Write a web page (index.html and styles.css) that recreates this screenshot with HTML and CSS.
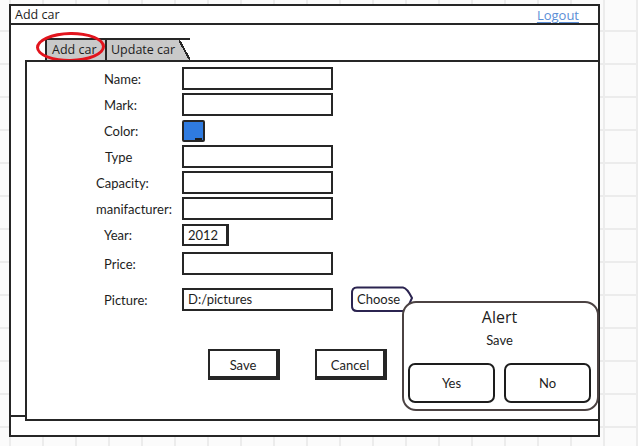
FILE: index.html
```html
<!DOCTYPE html>
<html>
<head>
    <meta http-equiv="Content-Type" content="text/html; charset=UTF-8">
    <link rel="stylesheet" href="styles.css">
</head>
<body>
    <div class="window">
        <div class="titlebar">
            <span class="title">Add car</span>
            <a class="logout" href="#">Logout</a>
        </div>

        <div class="content">
            <div class="tabs">
                <div class="tab tab-active">Add car</div>
                <div class="tab tab-slant">Update car</div>
                <div class="mark"></div>
            </div>

            <div class="panel">
                <div class="form">
                    <div class="row">
                        <span class="label">Name:</span>
                        <span class="field"></span>
                    </div>
                    <div class="row">
                        <span class="label">Mark:</span>
                        <span class="field"></span>
                    </div>
                    <div class="row">
                        <span class="label">Color:</span>
                        <span class="swatch"></span>
                    </div>
                    <div class="row">
                        <span class="label label-shift">Type</span>
                        <span class="field"></span>
                    </div>
                    <div class="row">
                        <span class="label label-wide">Capacity:</span>
                        <span class="field"></span>
                    </div>
                    <div class="row">
                        <span class="label label-wide">manifacturer:</span>
                        <span class="field"></span>
                    </div>
                    <div class="row">
                        <span class="label">Year:</span>
                        <span class="field field-short">2012</span>
                    </div>
                    <div class="row row-price">
                        <span class="label">Price:</span>
                        <span class="field"></span>
                    </div>
                    <div class="row row-picture">
                        <span class="label">Picture:</span>
                        <span class="field">D:/pictures</span>
                        <span class="choose">
                            <svg class="choose-shape" width="64" height="27" viewBox="0 0 64 27">
                                <path d="M7,1.5 H53 Q57,2 62,12 L56,25 H7 Q1.5,25 2,19 V8 Q1.5,1.5 7,1.5 Z" fill="#fff" stroke="#2b2450" stroke-width="2"/>
                            </svg>
                            <span class="choose-text">Choose</span>
                        </span>
                    </div>
                </div>

                <div class="actions">
                    <span class="button">Save</span>
                    <span class="button">Cancel</span>
                </div>

                <div class="alert">
                    <div class="alert-title">Alert</div>
                    <div class="alert-text">Save</div>
                    <div class="alert-buttons">
                        <span class="alert-button">Yes</span>
                        <span class="alert-button">No</span>
                    </div>
                </div>
            </div>

            <div class="statusbar"></div>
        </div>
    </div>
</body>
</html>
```

FILE: styles.css
```css
html, body {
    margin: 0;
    height: 100%;
}

body {
    background-color: #fbfbfb;
    background-image:
        linear-gradient(to right, #ececec 2px, transparent 2px),
        linear-gradient(to bottom, #ececec 2px, transparent 2px);
    background-size: 33px 33px;
    background-position: 42px 0, 0 30px;
    font-family: "Open Sans", "DejaVu Sans", sans-serif;
    color: #1d1d1d;
}

.window {
    box-sizing: border-box;
    width: 591px;
    height: 433px;
    margin: 4px 0 0 9px;
    border: 2px solid #262626;
    background: #fff;
    display: flex;
    flex-direction: column;
}

.titlebar {
    height: 17px;
    border-bottom: 2px solid #262626;
    display: flex;
    align-items: center;
    justify-content: space-between;
    padding: 0 19px 0 4px;
    font-size: 12.5px;
}

.logout {
    color: #5b8ed6;
    font-size: 13px;
    text-decoration: underline;
    text-decoration-thickness: 1px;
    text-underline-offset: 2px;
}

.content {
    flex: 1;
    display: flex;
    flex-direction: column;
}

.tabs {
    position: relative;
    display: flex;
    margin: 13px 0 0 34px;
    height: 22px;
}

.tab {
    box-sizing: border-box;
    height: 22px;
    background: #c9c9c9;
    border: 2px solid #262626;
    border-bottom: none;
    font-size: 12.5px;
    line-height: 19px;
    white-space: nowrap;
}

.tab-active {
    width: 60px;
    padding-left: 5px;
    border-right: none;
}

.tab-slant {
    position: relative;
    width: 74px;
    border-right: none;
    padding-left: 4px;
}

.tab-slant::after {
    content: "";
    position: absolute;
    top: -2px;
    right: -11px;
    width: 11px;
    height: 22px;
    background: linear-gradient(to top right, #c9c9c9 calc(50% - 1px), #262626 calc(50% - 1px), #262626 calc(50% + 1px), transparent calc(50% + 1px));
    border-top: 2px solid #262626;
    box-sizing: border-box;
}

.mark {
    position: absolute;
    left: -9px;
    top: -6px;
    width: 69px;
    height: 30px;
    box-sizing: border-box;
    border: 3.5px solid #e2141d;
    border-radius: 50%;
    transform: rotate(-1deg);
}

.panel {
    position: relative;
    z-index: 1;
    box-sizing: border-box;
    height: 361px;
    margin: 0 -2px 0 14px;
    border: 2px solid #262626;
    background: #fff;
    padding: 5px 0 0 0;
}

.form {
    display: flex;
    flex-direction: column;
    gap: 3px;
}

.row {
    display: flex;
    align-items: center;
    height: 23px;
}

.row-price {
    margin-top: 3px;
}

.row-picture {
    margin-top: 10px;
}

.label {
    box-sizing: border-box;
    width: 155px;
    padding-left: 77px;
    font-family: Lato, "DejaVu Sans", sans-serif;
    font-size: 13px;
}

.label-shift {
    padding-left: 78px;
}

.label-wide {
    padding-left: 69px;
}

.field {
    box-sizing: border-box;
    width: 151px;
    height: 23px;
    border: 2px solid #262626;
    font-family: Lato, "DejaVu Sans", sans-serif;
    font-size: 13px;
    line-height: 19px;
    padding-left: 4px;
}

.field-short {
    width: 47px;
    height: 22px;
    border-right-width: 3px;
}

.swatch {
    position: relative;
    box-sizing: border-box;
    width: 23px;
    height: 22px;
    background: #2f7be0;
    border: 2px solid #262626;
    border-radius: 2px;
}

.swatch::after {
    content: "";
    position: absolute;
    right: 1px;
    bottom: 0;
    width: 7px;
    height: 2px;
    background: #1d1d1d;
}

.choose {
    position: relative;
    width: 64px;
    height: 27px;
    margin-left: 17px;
    margin-top: -1px;
}

.choose-shape {
    position: absolute;
    left: 0;
    top: 0;
}

.choose-text {
    position: relative;
    display: block;
    padding-left: 7px;
    line-height: 27px;
    font-family: Lato, "DejaVu Sans", sans-serif;
    font-size: 13px;
}

.actions {
    display: flex;
    gap: 35px;
    margin: 38px 0 0 181px;
}

.button {
    box-sizing: border-box;
    width: 72px;
    height: 31px;
    border: 2px solid #262626;
    border-right-width: 4px;
    border-bottom-width: 4px;
    font-family: Lato, "DejaVu Sans", sans-serif;
    font-size: 13px;
    line-height: 29px;
    text-align: center;
}

.alert {
    position: absolute;
    left: 375px;
    top: 239px;
    box-sizing: border-box;
    width: 197px;
    height: 110px;
    border: 2px solid #4b4242;
    border-radius: 14px;
    background: #fff;
    padding: 0 6px 0 4px;
    text-align: center;
}

.alert-title {
    font-size: 16px;
    line-height: 24px;
    margin-top: 2px;
}

.alert-text {
    font-family: Lato, "DejaVu Sans", sans-serif;
    font-size: 13px;
    line-height: 22px;
}

.alert-buttons {
    display: grid;
    grid-template-columns: 1fr 1fr;
    gap: 9px;
    margin-top: 12px;
}

.alert-button {
    box-sizing: border-box;
    height: 40px;
    border: 2px solid #1d1d1d;
    border-radius: 7px;
    font-family: Lato, "DejaVu Sans", sans-serif;
    font-size: 13px;
    line-height: 36px;
}

.statusbar {
    flex: 1;
    margin-top: -6px;
    border-top: 2px solid #262626;
}
```
